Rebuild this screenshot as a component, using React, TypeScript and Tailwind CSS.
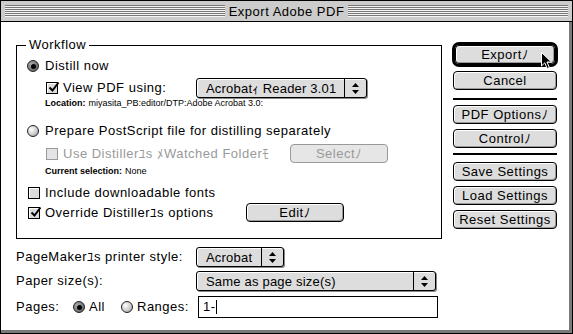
import React from 'react';

const font = "font-['Liberation_Sans','Noto_Sans_CJK_JP',sans-serif] tracking-[0.5px]";
const small = 'text-[9px] leading-none tracking-normal';

function Radio({ checked = false }: { checked?: boolean }) {
  return (
    <span
      className={`flex h-[12px] w-[12px] shrink-0 items-center justify-center rounded-full border border-[#222] ${
        checked
          ? 'bg-[radial-gradient(circle_at_35%_35%,#aaa,#555)]'
          : 'bg-[radial-gradient(circle_at_35%_35%,#fff,#ccc_55%,#888)]'
      }`}
    >
      {checked && <span className="h-[5px] w-[5px] rounded-full bg-black" />}
    </span>
  );
}

function Checkbox({ checked = false, disabled = false }: { checked?: boolean; disabled?: boolean }) {
  return (
    <span
      className={`relative h-[12px] w-[12px] shrink-0 border ${
        disabled ? 'border-[#999] bg-[#e4e4e4]' : 'border-black bg-[#dcdcdc] shadow-[inset_1px_1px_0_#fff]'
      }`}
    >
      {checked && (
        <svg className="absolute -top-[2px] left-[1px]" width="12" height="12" viewBox="0 0 12 12">
          <path d="M1.5 6.5 L4.5 9.5 L10.5 1.5" fill="none" stroke="#000" strokeWidth="2" />
        </svg>
      )}
    </span>
  );
}

function Button({ label, disabled = false, className = '' }: { label: string; disabled?: boolean; className?: string }) {
  return (
    <div
      className={`flex h-[19px] items-center justify-center whitespace-nowrap rounded-[4px] border text-[13px] leading-none ${
        disabled
          ? 'border-[#999] bg-[#e6e6e6] text-[#999]'
          : 'border-black bg-[#dddddd] shadow-[inset_1px_1px_0_#fff,inset_-1px_-1px_0_#9a9a9a]'
      } ${className}`}
    >
      {label}
    </div>
  );
}

function Arrows() {
  return (
    <svg width="7" height="11" viewBox="0 0 7 11">
      <path d="M3.5 0 L7 4 L0 4 Z M0 7 L7 7 L3.5 11 Z" fill="#000" />
    </svg>
  );
}

function Popup({ label, className = '' }: { label: string; className?: string }) {
  return (
    <div
      className={`flex h-[20px] items-stretch rounded-[3px] border border-black bg-[#dddddd] text-[13px] tracking-[0.2px] shadow-[1px_1px_0_#888,inset_1px_1px_0_#fff] ${className}`}
    >
      <span className="flex flex-1 items-center whitespace-nowrap pl-[9px] leading-none">{label}</span>
      <span className="flex w-[22px] items-center justify-center border-l border-black">
        <Arrows />
      </span>
    </div>
  );
}

function Stripes() {
  return <div className="h-[12px] flex-1 bg-[repeating-linear-gradient(to_bottom,#777_0_1px,#f4f4f4_1px_2px)]" />;
}

export default function App() {
  return (
    <div className={`relative flex h-[334px] w-[573px] flex-col bg-black p-px text-black ${font}`}>
      {/* title bar */}
      <div className="flex h-[21px] items-center border-b border-black bg-[#cccccc] px-[4px]">
        <Stripes />
        <span className="px-[4px] text-[13px] leading-none">Export Adobe PDF</span>
        <Stripes />
      </div>

      {/* body */}
      <div className="flex flex-1 border-b-[3px] border-r-[3px] border-[#7a7a7a] bg-white text-[13px]">
        <div className="ml-[15px] flex w-[426px] flex-col">
          <div className="relative mt-[23px] flex h-[194px] flex-col border border-black pl-[10px]">
            <span className="absolute -top-[9px] left-[9px] bg-white px-[3px] leading-[16px]">Workflow</span>

            <div className="mt-[12px] flex h-[16px] items-center gap-[6px]">
              <Radio checked />
              <span>Distill now</span>
            </div>

            <div className="mt-[4px] flex h-[20px] items-center pl-[19px]">
              <Checkbox checked />
              <span className="ml-[5px] w-[133px]">View PDF using:</span>
              <Popup label="Acrobatｨ Reader 3.01" className="w-[171px]" />
            </div>

            <div className={`mt-[1px] flex h-[9px] items-center pl-[18px] ${small}`}>
              <span className="font-bold">Location:</span>
              <span className="ml-[3px]">miyasita_PB:editor/DTP:Adobe Acrobat 3.0:</span>
            </div>

            <div className="mt-[15px] flex h-[16px] items-center gap-[6px]">
              <Radio />
              <span>Prepare PostScript file for distilling separately</span>
            </div>

            <div className="mt-[5px] flex h-[19px] items-center pl-[19px]">
              <Checkbox disabled />
              <span className="ml-[5px] w-[227px] text-[#999]">Use Distillerﾕs ﾒWatched Folderﾓ</span>
              <Button label="Selectﾉ" disabled className="w-[98px]" />
            </div>

            <div className={`mt-[3px] flex h-[10px] items-center pl-[18px] ${small}`}>
              <span className="font-bold">Current selection:</span>
              <span className="ml-[3px]">None</span>
            </div>

            <div className="mt-[9px] flex h-[16px] items-center pl-[1px]">
              <Checkbox />
              <span className="ml-[5px]">Include downloadable fonts</span>
            </div>

            <div className="mt-[2px] flex h-[19px] items-center pl-[1px]">
              <Checkbox checked />
              <span className="ml-[5px] w-[201px]">Override Distillerﾕs options</span>
              <Button label="Editﾉ" className="w-[98px]" />
            </div>
          </div>

          <div className="mt-[8px] flex h-[20px] items-center">
            <span className="w-[180px]">PageMakerﾕs printer style:</span>
            <Popup label="Acrobat" className="w-[88px]" />
          </div>

          <div className="mt-[4px] flex h-[20px] items-center">
            <span className="w-[180px]">Paper size(s):</span>
            <Popup label="Same as page size(s)" className="w-[240px]" />
          </div>

          <div className="mt-[5px] flex h-[22px] items-center">
            <span className="w-[57px]">Pages:</span>
            <Radio checked />
            <span className="ml-[4px] w-[32px]">All</span>
            <Radio />
            <span className="ml-[4px] w-[61px]">Ranges:</span>
            <div className="flex h-[22px] w-[240px] items-center border border-black pl-[4px]">
              <span>1-</span>
              <span className="h-[14px] w-px bg-black" />
            </div>
          </div>
        </div>

        <div className="ml-[10px] mt-[20px] flex w-[106px] flex-col">
          <div className="h-[25px] rounded-[7px] border-[3px] border-black bg-[#888]">
            <Button label="Exportﾉ" />
          </div>
          <Button label="Cancel" className="ml-px mt-[4px] w-[104px]" />
          <div className="ml-px mt-[8px] h-[2px] w-[104px] bg-black" />
          <Button label="PDF Optionsﾉ" className="ml-px mt-[5px] w-[104px]" />
          <Button label="Controlﾉ" className="ml-px mt-[5px] w-[104px]" />
          <div className="ml-px mt-[5px] h-[2px] w-[104px] bg-black" />
          <Button label="Save Settings" className="ml-px mt-[7px] w-[104px]" />
          <Button label="Load Settings" className="ml-px mt-[5px] w-[104px]" />
          <Button label="Reset Settings" className="ml-px mt-[5px] w-[104px]" />
        </div>
      </div>

      {/* mouse pointer over the Export button */}
      <svg className="absolute left-[541px] top-[52px]" width="12" height="18" viewBox="0 0 12 18">
        <path d="M0.5 0.5 L0.5 14 L3.8 10.8 L6.2 16.5 L8.4 15.6 L6 10 L10.5 10 Z" fill="#000" stroke="#fff" strokeWidth="1" />
      </svg>
    </div>
  );
}
